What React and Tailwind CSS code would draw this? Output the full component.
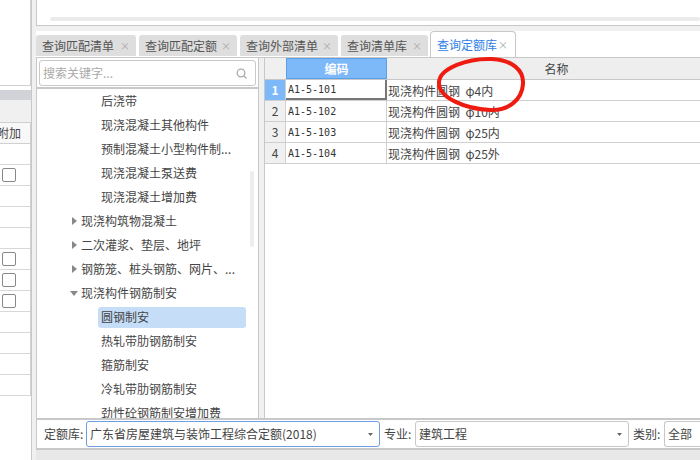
import React from "react";

const tabs = [
  { label: "查询匹配清单", width: "w-[100px]" },
  { label: "查询匹配定额", width: "w-[98px]" },
  { label: "查询外部清单", width: "w-[98px]" },
  { label: "查询清单库", width: "w-[87px]" },
];

const tree = [
  { label: "后浇带", level: 2 },
  { label: "现浇混凝土其他构件", level: 2 },
  { label: "预制混凝土小型构件制...", level: 2 },
  { label: "现浇混凝土泵送费", level: 2 },
  { label: "现浇混凝土增加费", level: 2 },
  { label: "现浇构筑物混凝土", level: 1, arrow: "right" },
  { label: "二次灌浆、垫层、地坪", level: 1, arrow: "right" },
  { label: "钢筋笼、桩头钢筋、网片、...", level: 1, arrow: "right" },
  { label: "现浇构件钢筋制安", level: 1, arrow: "down" },
  { label: "圆钢制安", level: 2, selected: true },
  { label: "热轧带肋钢筋制安", level: 2 },
  { label: "箍筋制安", level: 2 },
  { label: "冷轧带肋钢筋制安", level: 2 },
  { label: "劲性砼钢筋制安增加费", level: 2 },
];

const rows = [
  { code: "A1-5-101", name: "现浇构件圆钢  φ4内" },
  { code: "A1-5-102", name: "现浇构件圆钢  φ10内" },
  { code: "A1-5-103", name: "现浇构件圆钢  φ25内" },
  { code: "A1-5-104", name: "现浇构件圆钢  φ25外" },
];

const sideRows = [false, true, false, false, false, true, true, true, false, false, false, false];

const Caret = () => (
  <svg width="5" height="3" viewBox="0 0 5 3" className="shrink-0">
    <path d="M0 0h5L2.5 3z" fill="#666" />
  </svg>
);

const TreeRow = ({ item }) => {
  if (item.level === 1) {
    return (
      <div className="h-[24px] flex items-center text-[12px] text-[#444] whitespace-nowrap">
        <div className="w-[44px] pl-[35px] flex items-center shrink-0">
          {item.arrow === "right" ? (
            <svg width="5" height="8" viewBox="0 0 5 8"><path d="M0 0l5 4-5 4z" fill="#888" /></svg>
          ) : (
            <svg width="8" height="5" viewBox="0 0 8 5" className="-ml-[2px]"><path d="M0 0h8L4 5z" fill="#888" /></svg>
          )}
        </div>
        {item.label}
      </div>
    );
  }
  return (
    <div className="h-[24px] pl-[61px] pr-[12px] flex items-center text-[12px] text-[#444] whitespace-nowrap">
      <div className={`flex-1 h-[21px] pl-[3px] flex items-center rounded-[3px] ${item.selected ? "bg-[#c6ddf7]" : ""}`}>
        {item.label}
      </div>
    </div>
  );
};

const GridRow = ({ row, index }) => {
  const active = index === 0;
  return (
    <div className="h-[21px] flex border-b border-[#cfcfcf] text-[12px] text-[#444]">
      <div className={`w-[21px] shrink-0 flex items-center justify-center border-r border-[#cfcfcf] ${active ? "bg-[#7db8f8] text-white font-bold" : "bg-[#f0f0f0]"}`}>
        {index + 1}
      </div>
      <div className={`w-[101px] shrink-0 pl-[2px] flex items-center text-[10px] text-[#333] font-['DejaVu_Sans_Mono',monospace] ${active ? "border-r-2 border-b-2 border-[#777]" : "border-r border-[#cfcfcf]"}`}>
        {row.code}
      </div>
      <div className="flex-1 pl-[1px] pt-[1px] flex items-center whitespace-pre">{row.name}</div>
    </div>
  );
};

const Select = ({ value, width, focused }) => (
  <div className={`${width} h-[26px] shrink-0 pl-[3px] pr-[6px] flex items-center justify-between bg-white rounded-[3px] border text-[12px] text-[#444] whitespace-nowrap ${focused ? "border-[#6f9fe0]" : "border-[#c8c8c8]"}`}>
    {value}
    <Caret />
  </div>
);

export default function App() {
  return (
    <div className="relative w-[700px] h-[460px] overflow-hidden flex bg-[#f0f0f0] font-['Noto_Sans_CJK_SC','Liberation_Sans',sans-serif]">
      {/* left side, mostly cut off */}
      <div className="w-[32px] shrink-0 h-full flex flex-col border-r border-[#c8c8c8] bg-white">
        <div className="h-[86px] shrink-0 border-r border-b border-[#d0d0d0]" />
        <div className="h-[4px] shrink-0" />
        <div className="h-[10px] shrink-0 bg-[#d2d3d8]" />
        <div className="h-[22px] shrink-0 bg-[#f0f0f0]" />
        <div className="w-[31px] border-r border-t border-[#d0d0d0]">
          <div className="h-[21px] flex items-center justify-end pr-[9px] bg-[#f8f8f8] border-b border-[#d0d0d0] text-[12px] text-[#444] overflow-hidden whitespace-nowrap">
            <span className="shrink-0">附加</span>
          </div>
          {sideRows.map((checked, i) => (
            <div key={i} className="h-[21px] flex items-center pl-[2px] border-b border-[#d8d8d8]">
              {checked && <div className="w-[14px] h-[14px] rounded-[2px] border border-[#888] bg-white" />}
            </div>
          ))}
        </div>
      </div>

      <div className="flex-1 min-w-0 pl-[4px] flex flex-col">
        {/* top panel */}
        <div className="h-[26px] shrink-0 pl-[13px] pt-[17px] bg-white border-l border-b border-[#c8c8c8]">
          <div className="h-[4px] rounded-[2px] bg-[#ebebeb]" />
        </div>
        <div className="h-[5px] shrink-0 bg-[#f0f0f0]" />

        {/* tabs */}
        <div className="h-[27px] shrink-0 flex items-end gap-[3px] bg-white border-b border-[#c8c8c8]">
          {tabs.map((tab) => (
            <div key={tab.label} className={`${tab.width} h-[21px] mb-[1px] shrink-0 flex items-center justify-between pl-[6px] pr-[6px] rounded-t-[3px] bg-[#dedede] text-[12px] text-[#555] whitespace-nowrap`}>
              {tab.label}
              <span className="text-[10px] text-[#aaa]">×</span>
            </div>
          ))}
          <div className="w-[86px] h-[26px] -ml-[1px] shrink-0 flex items-center justify-between pl-[6px] pr-[7px] rounded-t-[4px] border border-b-0 border-[#c8c8c8] bg-white text-[12px] text-[#2f80e6] whitespace-nowrap">
            查询定额库
            <span className="text-[10px] text-[#aaa]">×</span>
          </div>
        </div>

        {/* tree and grid */}
        <div className="h-[360px] shrink-0 flex border-l border-[#c8c8c8]">
          <div className="w-[221px] shrink-0 flex flex-col bg-white">
            <div className="h-[31px] shrink-0 px-[2px] pt-[2px] bg-white border-b-2 border-[#c8c8c8]">
              <div className="h-[26px] flex items-center justify-between pl-[3px] pr-[8px] rounded-[3px] border border-[#c8c8c8] text-[12px] text-[#aaa]">
                搜索关键字...
                <svg width="11" height="11" viewBox="0 0 11 11" fill="none" stroke="#aaa" strokeWidth="1.3">
                  <circle cx="5" cy="5" r="3.8" />
                  <path d="M8 8l2.5 2.5" />
                </svg>
              </div>
            </div>
            <div className="relative flex-1 min-h-0 overflow-hidden">
              {tree.map((item) => <TreeRow key={item.label} item={item} />)}
              <div className="absolute right-[4px] top-[82px] w-[4px] h-[76px] rounded-[2px] bg-[#ededed]" />
            </div>
          </div>

          <div className="w-[6px] shrink-0 bg-[#f0f0f0] border-l border-[#c8c8c8]" />

          <div className="flex-1 min-w-0 bg-white border-l border-[#c8c8c8]">
            <div className="h-[22px] flex border-b border-[#c8c8c8] text-[12px]">
              <div className="w-[21px] shrink-0 bg-[#f0f0f0]" />
              <div className="w-[101px] shrink-0 flex items-center justify-center bg-[#7db8f8] text-white font-bold border border-[#5a9fe8]">
                编码
              </div>
              <div className="flex-1 pl-[26px] flex items-center justify-center bg-[#eeeeee] text-[#444]">名称</div>
            </div>
            {rows.map((row, i) => <GridRow key={row.code} row={row} index={i} />)}
          </div>
        </div>

        {/* bottom filter bar */}
        <div className="h-[32px] shrink-0 flex items-center pl-[7px] bg-white border-y-2 border-[#c8c8c8] border-l text-[12px] text-[#444] whitespace-nowrap">
          <span className="w-[42px] shrink-0">定额库:</span>
          <Select value="广东省房屋建筑与装饰工程综合定额(2018)" width="w-[294px]" focused />
          <span className="ml-[4px] w-[28px] mr-[3px] shrink-0">专业:</span>
          <Select value="建筑工程" width="w-[214px]" />
          <span className="ml-[4px] w-[27px] mr-[4px] shrink-0">类别:</span>
          <div className="flex-1 h-[26px] pl-[3px] flex items-center rounded-l-[3px] border border-r-0 border-[#c8c8c8]">全部</div>
        </div>
        <div className="flex-1 bg-[#e8e8e8]" />
      </div>

      {/* red marker circle drawn on top of the screenshot */}
      <svg className="absolute left-[430px] top-[50px] pointer-events-none" width="102" height="68" viewBox="0 0 102 68" fill="none">
        <path
          d="M9 32C10 18 38 8 62 9C82 10 94 20 93 34C92 50 78 61 60 60C36 59 8 48 9 32Z"
          stroke="#ee1c10"
          strokeWidth="4"
        />
      </svg>
    </div>
  );
}
